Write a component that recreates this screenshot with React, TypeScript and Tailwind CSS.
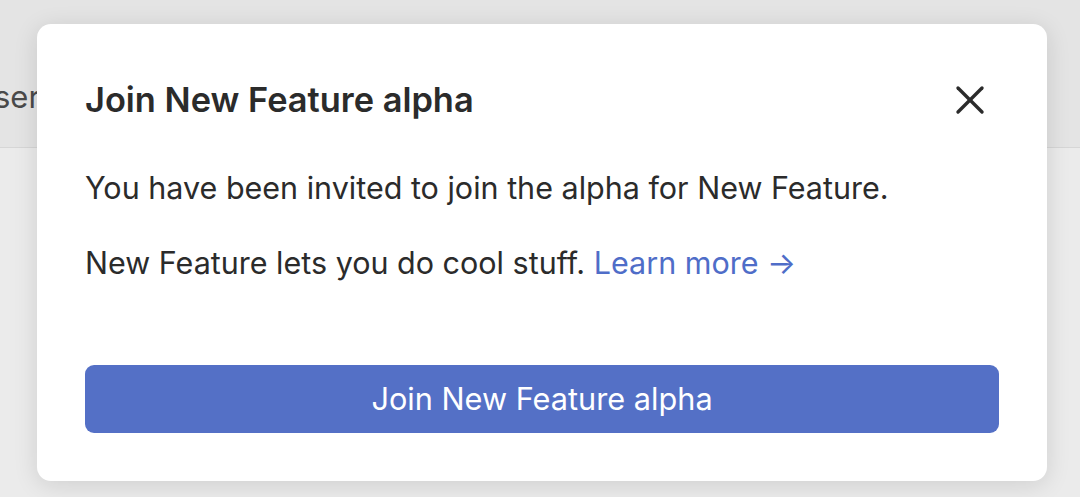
import { X } from 'lucide-react'

export default function App() {
  return (
    <div className="relative h-[497px] w-[1080px] overflow-hidden bg-[#ebebeb] font-['Inter',sans-serif]">
      {/* page behind the dialog */}
      <div className="flex h-[148px] items-center border-b border-[#d6d6d6] bg-[#e4e4e4] pt-[48px]">
        <span className="-ml-[6px] text-[31px] text-[#4a4a4a]">ser</span>
      </div>

      {/* dialog */}
      <div className="absolute left-[37px] top-[24px] flex h-[457px] w-[1010px] flex-col rounded-[14px] bg-white px-[48px] pt-[56px] shadow-[0_4px_24px_rgba(0,0,0,0.12)]">
        <div className="flex h-[40px] items-center justify-between">
          <h2 className="text-[34.4px] font-semibold leading-[40px] text-[#2b2b2b]">Join New Feature alpha</h2>
          <button className="mr-[5px] text-[#2b2b2b]" aria-label="Close dialog">
            <X className="h-[48px] w-[48px]" strokeWidth={1.7} />
          </button>
        </div>
        <p className="mt-[48px] text-[30.5px] leading-[40px] text-[#2b2b2b]">
          You have been invited to join the alpha for New Feature.
        </p>
        <p className="mt-[35px] text-[30.5px] leading-[40px] text-[#2b2b2b]">
          New Feature lets you do cool stuff. <span className="text-[#4f6dc8]">Learn more →</span>
        </p>
        <button className="mt-[82px] h-[68px] w-full rounded-[9px] bg-[#5470c6] text-[30.7px] text-white">
          Join New Feature alpha
        </button>
      </div>
    </div>
  )
}
